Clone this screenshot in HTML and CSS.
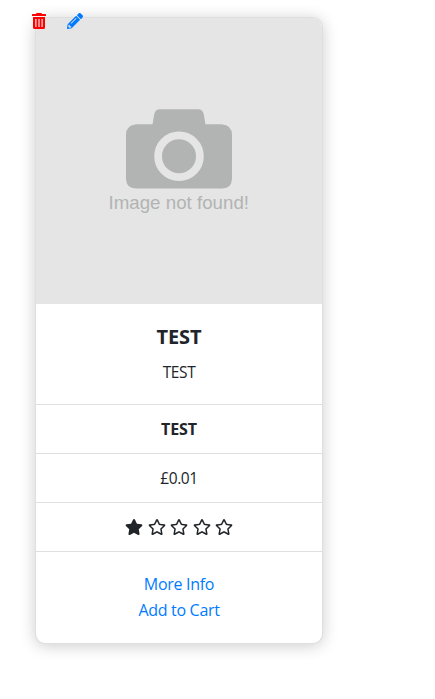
FILE: index.html
```html
<!DOCTYPE html>
<html lang="en">
<head>
<meta charset="utf-8">
<title>Product</title>
<link rel="stylesheet" href="styles.css">
</head>
<body>
<svg class="sprite" aria-hidden="true">
  <symbol id="star" viewBox="0 0 576 512"><path d="M259.3 17.8L194 150.2 47.9 171.5c-26.2 3.8-36.7 36.1-17.7 54.6l105.7 103-25 145.5c-4.5 26.3 23.2 46 46.4 33.7L288 439.6l130.7 68.7c23.2 12.2 50.9-7.4 46.4-33.7l-25-145.5 105.7-103c19-18.5 8.5-50.8-17.7-54.6L382 150.2 316.7 17.8c-11.7-23.6-45.6-23.9-57.4 0z"/></symbol>
  <symbol id="star-empty" viewBox="0 0 576 512"><path d="M528.1 171.5L382 150.2 316.7 17.8c-11.7-23.6-45.6-23.9-57.4 0L194 150.2 47.9 171.5c-26.2 3.8-36.7 36.1-17.7 54.6l105.7 103-25 145.5c-4.5 26.3 23.2 46 46.4 33.7L288 439.6l130.7 68.7c23.2 12.2 50.9-7.4 46.4-33.7l-25-145.5 105.7-103c19-18.5 8.5-50.8-17.7-54.6zM388.6 312.3l23.7 138.4L288 385.4l-124.3 65.3 23.7-138.4-100.6-98 139-20.2 62.2-126 62.2 126 139 20.2-100.6 98z"/></symbol>
</svg>
<article class="card">
  <div class="actions">
    <svg class="trash" viewBox="0 0 14 16"><path fill-rule="evenodd" d="M0 1.500Q0 1 .5 1H4L4.600 0H9.400L10 1H13.500Q14 1 14 1.500V3H0ZM1 4H13V14.500Q13 16 11.500 16H2.500Q1 16 1 14.500ZM3.300 6V14H4.500V6ZM6.400 6V14H7.600V6ZM9.500 6V14H10.700V6Z"/></svg>
    <svg class="pencil" viewBox="0 0 512 512"><path d="M497.900 142.100l-46.100 46.100c-4.700 4.700-12.300 4.700-17 0l-111-111c-4.700-4.700-4.700-12.300 0-17l46.100-46.100c18.700-18.700 49.100-18.700 67.900 0l60.100 60.100c18.800 18.700 18.800 49.100 0 67.900zM284.200 99.800L21.600 362.400.4 483.900c-2.900 16.400 11.400 30.600 27.800 27.800l121.500-21.300 262.600-262.600c4.700-4.700 4.700-12.300 0-17l-111-111c-4.800-4.700-12.400-4.700-17.100 0zM124.100 339.900c-5.500-5.500-5.500-14.300 0-19.800l154-154c5.500-5.500 14.300-5.500 19.800 0s5.500 14.300 0 19.800l-154 154c-5.500 5.500-14.300 5.500-19.800 0zM88 424h48v36.300l-64.500 11.300-31.100-31.100L51.700 376H88v48z"/></svg>
  </div>
  <svg class="photo" viewBox="0 0 286 286">
    <rect width="286" height="286" fill="#e5e5e5"/>
    <path fill="#b2b4b3" d="M100.500 106.300H116.500L118.300 96Q119.200 91.300 124 91.300H162Q166.800 91.300 167.700 96L169.500 106.300H185.500Q196 107 196 117V160Q196 170.500 185.500 170.500H100.500Q90 170.500 90 160V117Q90 107 100.500 106.300Z"/>
    <circle cx="143" cy="138.300" r="20.900" fill="none" stroke="#e5e5e5" stroke-width="7.800"/>
    <text class="photo-text" x="72.500" y="190.700" textLength="140.500" lengthAdjust="spacingAndGlyphs">Image not found!</text>
  </svg>
  <div class="summary">
    <h5>TEST</h5>
    <p>TEST</p>
  </div>
  <div class="row"><b>TEST</b></div>
  <div class="row"><span>£0.01</span></div>
  <div class="row stars">
    <svg><use href="#star"/></svg>
    <svg><use href="#star-empty"/></svg>
    <svg><use href="#star-empty"/></svg>
    <svg><use href="#star-empty"/></svg>
    <svg><use href="#star-empty"/></svg>
  </div>
  <div class="links">
    <a class="more" href="#">More Info</a>
    <a class="cart" href="#">Add to Cart</a>
  </div>
</article>
</body>
</html>
```

FILE: styles.css
```css
* { box-sizing: border-box; }
body {
  margin: 0;
  min-height: 699px;
  padding: 17px 0 0 35px;
  background: #fff;
  color: #212529;
  font: 16px/24px "Open Sans", "Noto Sans", sans-serif;
}
.sprite { position: absolute; width: 0; height: 0; }
.card {
  position: relative;
  width: 288px;
  height: 627px;
  border: 1px solid rgba(0, 0, 0, .125);
  border-radius: 10px;
  background: #fff;
  box-shadow: 0 2px 16px rgba(0, 0, 0, .2);
  text-align: center;
}
.actions {
  position: absolute;
  top: -5px;
  left: -4px;
  display: flex;
  gap: 21px;
}
.actions svg { height: 16px; display: block; }
.trash { width: 14px; fill: red; }
.pencil { width: 16px; fill: #007bff; }
.photo {
  display: block;
  width: 286px;
  height: 286px;
  border-radius: 9px 9px 0 0;
}
.photo-text { font: 19px "Liberation Sans", Arial, sans-serif; fill: #b2b4b3; }
.summary { height: 100px; padding-top: 21px; }
h5 { margin: 0 0 11px; font-size: 20px; line-height: 24px; font-weight: 700; letter-spacing: -.1px; }
p { margin: 0; font-size: 15.500px; letter-spacing: -.4px; }
.row {
  height: 49px;
  padding-top: 12px;
  border-top: 1px solid #dfdfdf;
}
.row b { letter-spacing: -.1px; }
.row span { font-size: 15.500px; letter-spacing: -.4px; }
.stars { display: flex; justify-content: center; gap: 4.500px; padding-top: 16px; }
.stars svg { width: 18px; height: 16px; fill: #212529; }
.links {
  display: flex;
  flex-direction: column;
  align-items: center;
  gap: 2px;
  padding-top: 20px;
  border-top: 1px solid #dfdfdf;
}
.links a { color: #007bff; text-decoration: none; letter-spacing: -.3px; }
```
